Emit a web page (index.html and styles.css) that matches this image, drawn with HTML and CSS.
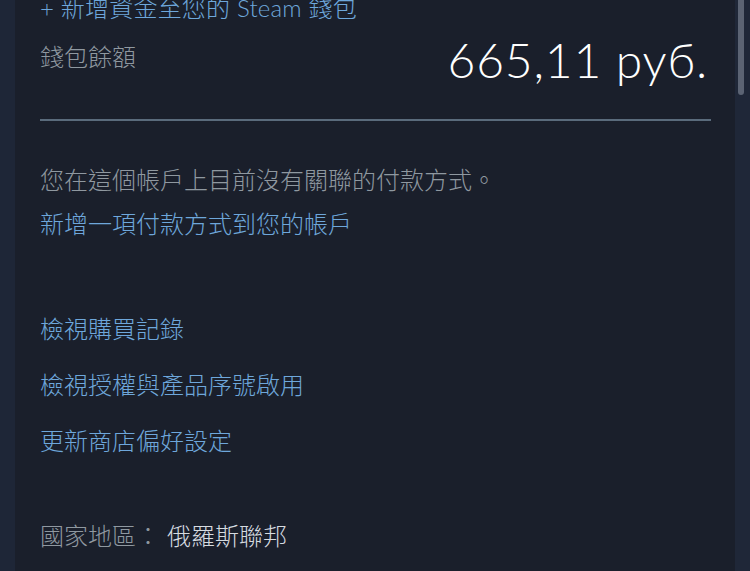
FILE: index.html
```
<!DOCTYPE html>
<html lang="zh-Hant">
<head>
<meta charset="utf-8">
<link rel="stylesheet" href="styles.css">
</head>
<body>
<div class="frame">
  <div class="side"></div>
  <main class="panel">
    <div class="content">
      <a class="link add-funds">+ 新增資金至您的 Steam 錢包</a>
      <div class="balance-row">
        <span class="label balance-label">錢包餘額</span>
        <span class="amount">665,11 руб.</span>
      </div>
      <div class="divider"></div>
      <p class="label no-payment">您在這個帳戶上目前沒有關聯的付款方式。</p>
      <a class="link add-payment">新增一項付款方式到您的帳戶</a>
      <ul class="links">
        <li><a class="link">檢視購買記錄</a></li>
        <li><a class="link">檢視授權與產品序號啟用</a></li>
        <li><a class="link">更新商店偏好設定</a></li>
      </ul>
      <div class="country">
        <span class="label">國家地區：</span><span class="country-value">俄羅斯聯邦</span>
      </div>
    </div>
  </main>
  <div class="side scroll">
    <div class="thumb"></div>
  </div>
</div>
</body>
</html>
```
FILE: styles.css
```
html, body {
  margin: 0;
  padding: 0;
  background: #1e2637;
  overflow: hidden;
}
body {
  font-family: "Lato", "Noto Sans CJK TC", sans-serif;
  font-weight: 300;
  font-size: 24px;
}
.frame {
  display: flex;
  width: 750px;
  height: 571px;
  overflow: hidden;
}
.side {
  width: 15px;
  flex: none;
  background: #1e2637;
}
.scroll {
  background: #1f2738;
  padding-left: 3px;
  box-sizing: border-box;
}
.thumb {
  width: 6px;
  height: 95px;
  background: #5b6373;
  border-radius: 0 0 3px 3px;
}
.panel {
  width: 720px;
  flex: none;
  background: #1a1f2b;
  overflow: hidden;
}
.content {
  margin-top: -8px;
  padding: 0 24px 0 25px;
}
.link {
  display: block;
  color: #6ea7db;
  line-height: 32px;
  text-decoration: none;
}
.add-funds {
  letter-spacing: 0.2px;
}
.label {
  color: #8f98a0;
}
.balance-row {
  display: flex;
  justify-content: space-between;
  align-items: flex-start;
  margin-top: 8px;
  padding-right: 3px;
}
.balance-label {
  line-height: 32px;
  margin-top: 9px;
}
.amount {
  color: #ffffff;
  font-size: 48px;
  font-weight: 300;
  letter-spacing: 0.8px;
  line-height: 56px;
}
.divider {
  height: 2px;
  background: #5a6b7c;
  margin-top: 31px;
}
.no-payment {
  margin: 43px 0 0;
  line-height: 32px;
}
.add-payment {
  margin-top: 12px;
}
.links {
  list-style: none;
  margin: 73px 0 0;
  padding: 0;
  display: flex;
  flex-direction: column;
  gap: 24px;
}
.country {
  margin-top: 63px;
  line-height: 32px;
  display: flex;
}
.country-value {
  color: #d6dbe0;
  margin-left: 7px;
}
```
